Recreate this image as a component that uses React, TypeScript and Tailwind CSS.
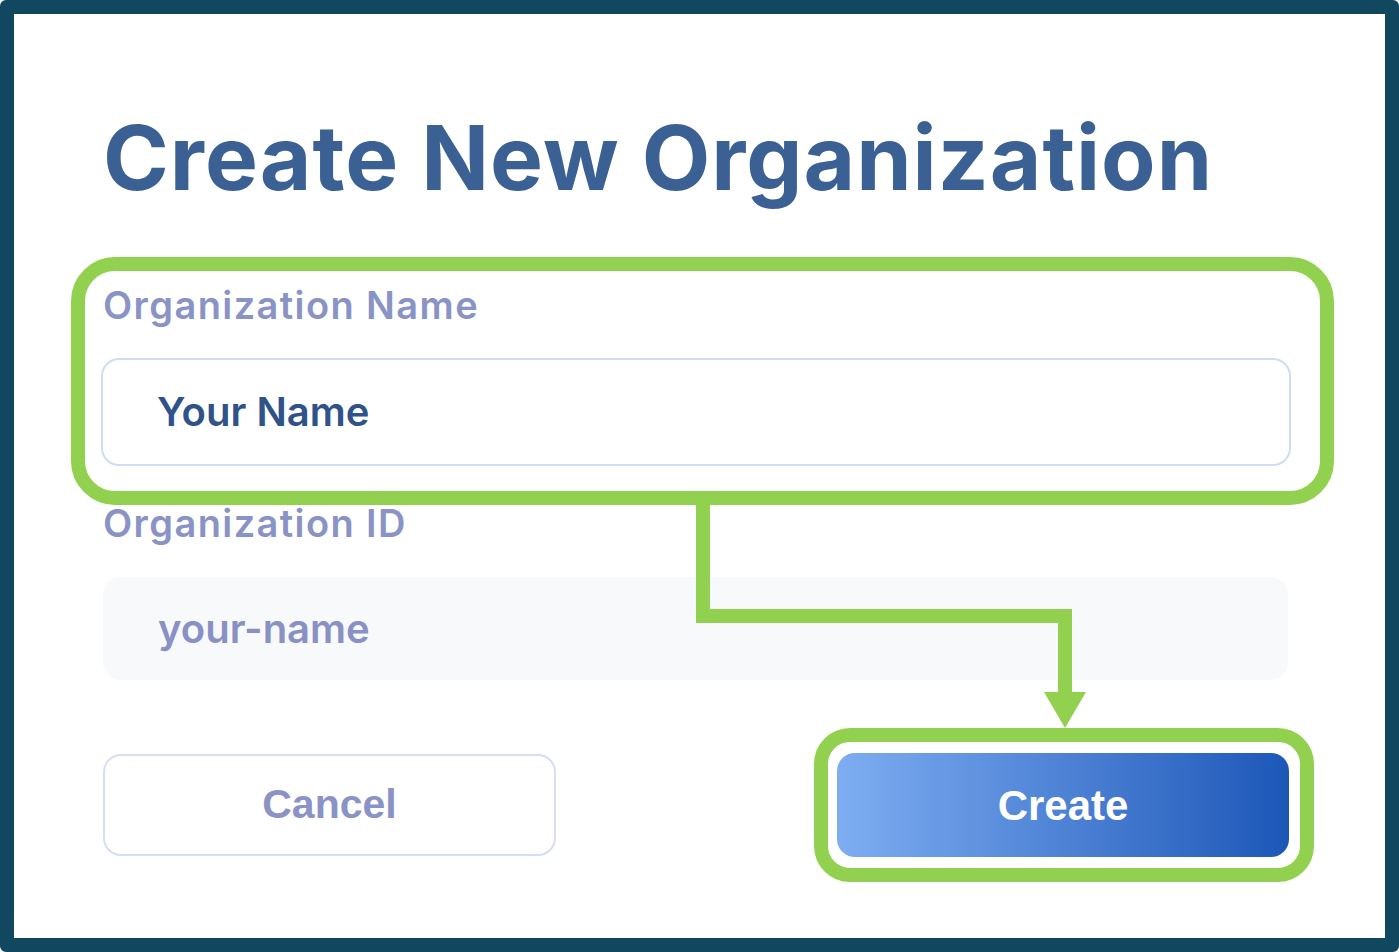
import React from 'react';

const sans = "font-['Inter','Liberation_Sans',sans-serif]";
const helv = "font-['Liberation_Sans','Inter',sans-serif]";

function FlowArrow() {
  // connector between the highlighted field and the Create button
  return (
    <svg
      className="absolute left-[676px] top-[481px] pointer-events-none"
      width="400"
      height="240"
      viewBox="0 0 400 240"
    >
      <path
        d="M13 10 V121 H375 V198"
        fill="none"
        stroke="#92d050"
        strokeWidth="14"
        strokeLinejoin="miter"
      />
      <polygon points="354,197 396,197 375,233" fill="#92d050" />
    </svg>
  );
}

export default function App() {
  return (
    <div className={`relative w-[1399px] h-[952px] bg-white border-[14px] border-[#11475f] rounded-[6px] ${sans}`}>
      <div className="pl-[88px] pr-[95px] pt-[99px]">
        <h1 className="text-[89px] leading-none font-bold text-[#3b6094] pl-[1px] tracking-[1px]">
          Create New Organization
        </h1>

        {/* Organization name — highlighted */}
        <div className="relative mt-[84px]">
          <div className="absolute -left-[31px] -right-[44px] -top-[29px] -bottom-[39px] border-[14px] border-[#92d050] rounded-[44px] pointer-events-none" />
          <label className="block pl-[1px] text-[38px] leading-none font-semibold text-[#8a93c5] tracking-[1.4px]">
            Organization Name
          </label>
          <div className="mt-[34px] h-[108px] w-[1190px] -ml-[1px] flex items-center pl-[54px] border-[2px] border-[#cfdcf6] rounded-[18px]">
            <span className="text-[40px] leading-none font-semibold text-[#2f5389]">Your Name</span>
          </div>
        </div>

        {/* Organization ID */}
        <label className="block mt-[38px] pl-[1px] text-[38px] leading-none font-semibold text-[#8a93c5] tracking-[1.4px]">
          Organization ID
        </label>
        <div className="mt-[35px] h-[103px] w-[1185px] ml-[1px] flex items-center pl-[55px] bg-[#f7f9fb] rounded-[18px]">
          <span className="text-[40px] leading-none font-semibold text-[#8890c4]">your-name</span>
        </div>

        {/* Actions */}
        <div className="mt-[73px] flex items-center justify-between w-[1186px] ml-[1px]">
          <button className={`h-[102px] w-[453px] border-[2px] border-[#d6def5] rounded-[18px] text-[41px] font-bold text-[#8a92c6] ${helv}`}>
            Cancel
          </button>
          <div className="relative">
            <div className="absolute -left-[23px] -right-[25px] -top-[25px] -bottom-[25px] border-[14px] border-[#92d050] rounded-[36px] pointer-events-none" />
            <button className={`h-[104px] w-[452px] rounded-[18px] bg-gradient-to-r from-[#7eadf1] to-[#1c57b8] text-[42px] font-bold text-white ${helv}`}>
              Create
            </button>
          </div>
        </div>
      </div>

      <FlowArrow />
    </div>
  );
}
